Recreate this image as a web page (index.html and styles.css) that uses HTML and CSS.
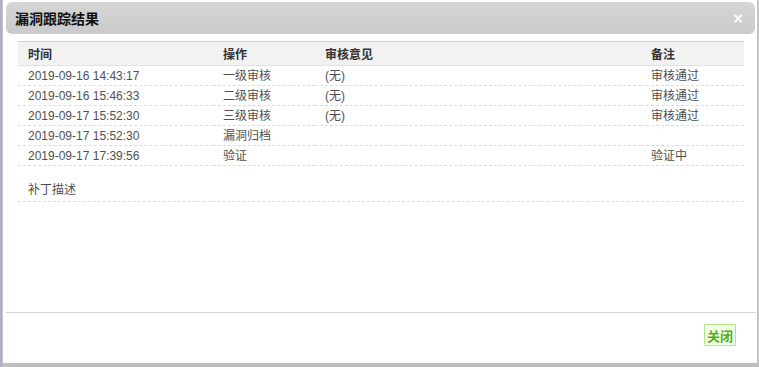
FILE: index.html
```html
<!DOCTYPE html>
<html lang="zh-CN">
<head>
  <meta charset="UTF-8" />
  <title>漏洞跟踪结果</title>
  <link rel="stylesheet" href="styles.css">
</head>
<body>
  <div class="dialog">
    <div class="dialog-head">
      <span class="dialog-title">漏洞跟踪结果</span>
      <span class="dialog-close">×</span>
    </div>

    <div class="dialog-body">
      <table class="track-table">
        <colgroup>
          <col class="col-time" />
          <col class="col-op" />
          <col class="col-opinion" />
          <col class="col-note" />
        </colgroup>
        <thead>
          <tr>
            <th>时间</th>
            <th>操作</th>
            <th>审核意见</th>
            <th>备注</th>
          </tr>
        </thead>
        <tbody>
          <tr><td>2019-09-16 14:43:17</td><td>一级审核</td><td>(无)</td><td>审核通过</td></tr>
          <tr><td>2019-09-16 15:46:33</td><td>二级审核</td><td>(无)</td><td>审核通过</td></tr>
          <tr><td>2019-09-17 15:52:30</td><td>三级审核</td><td>(无)</td><td>审核通过</td></tr>
          <tr><td>2019-09-17 15:52:30</td><td>漏洞归档</td><td></td><td></td></tr>
          <tr><td>2019-09-17 17:39:56</td><td>验证</td><td></td><td>验证中</td></tr>
        </tbody>
      </table>

      <div class="patch">补丁描述</div>
    </div>

    <div class="dialog-foot">
      <button class="btn-close">关闭</button>
    </div>
  </div>
</body>
</html>
```

FILE: styles.css
```css
body {
  margin: 0;
  padding: 0;
  background-color: #a9b1c4;
  font-family: "Liberation Sans", "Noto Sans CJK SC", sans-serif;
  font-size: 12px;
}

.dialog {
  margin-left: 2px;
  height: 367px;
  box-sizing: border-box;
  background-color: #fff;
  border-left: 1px solid #c4c4c4;
  border-right: 2px solid #c4c4c4;
  border-bottom: 4px solid #bdbdbd;
  display: flex;
  flex-direction: column;
}

/* title bar */
.dialog-head {
  margin: 2px 2px 0 3px;
  height: 32px;
  border-radius: 6px;
  background: linear-gradient(#d6d6d6, #cacaca);
  display: flex;
  align-items: center;
  justify-content: space-between;
  padding: 0 11px 0 9px;
}

.dialog-title {
  font-size: 14px;
  font-weight: bold;
  color: #111;
}

.dialog-close {
  color: #fff;
  font-size: 14px;
  font-weight: bold;
  font-family: "DejaVu Sans", sans-serif;
}

/* table */
.dialog-body {
  padding: 7px 0 0 15px;
}

.track-table {
  width: 726px;
  border-collapse: collapse;
  table-layout: fixed;
  color: #505050;
}

.col-time { width: 195px; }
.col-op { width: 102px; }
.col-opinion { width: 326px; }
.col-note { width: 103px; }

.track-table th {
  height: 23px;
  padding: 0 10px;
  text-align: left;
  font-weight: bold;
  color: #333;
  background-color: #f2f2f2;
  border-top: 1px solid #cfcfcf;
  border-bottom: 1px solid #e2e2e2;
}

.track-table td {
  height: 19px;
  padding: 0 10px;
  line-height: 14px;
  border-bottom: 1px dashed #dcdcdc;
  white-space: nowrap;
}

.patch {
  width: 706px;
  padding: 17px 10px 4px;
  line-height: 14px;
  color: #505050;
  border-bottom: 1px dashed #dcdcdc;
}

/* footer */
.dialog-foot {
  margin: auto 1px 0 3px;
  border-top: 1px solid #d4d4d4;
  padding: 11px 20px 17px 0;
  display: flex;
  justify-content: flex-end;
}

.btn-close {
  height: 22px;
  padding: 0 2px;
  font-family: "Noto Sans CJK SC", sans-serif;
  font-size: 13px;
  font-weight: bold;
  color: #52b012;
  background-color: #f2ffe8;
  border: 1px solid #b4e48a;
  border-radius: 1px;
}
```
